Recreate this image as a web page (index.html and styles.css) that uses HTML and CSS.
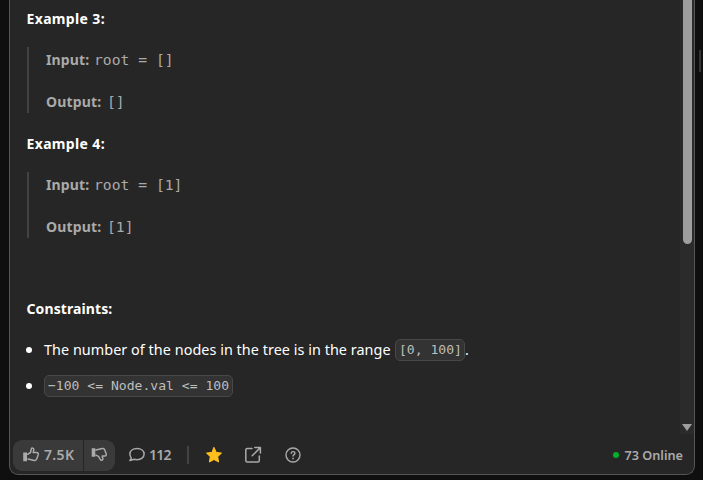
FILE: index.html
```
<!DOCTYPE html>
<html lang="en">
<head>
<meta charset="utf-8">
<title>Problem description</title>
<link rel="stylesheet" href="styles.css">
</head>
<body>
<main class="panel">
  <div class="body">
    <article class="content">
      <h2 class="title">Example 3:</h2>
      <div class="example">
        <p><strong class="t-input">Input:</strong><code>root = []</code></p>
        <p><strong class="t-output">Output:</strong><code>[]</code></p>
      </div>
      <h2 class="title">Example 4:</h2>
      <div class="example">
        <p><strong class="t-input">Input:</strong><code>root = [1]</code></p>
        <p><strong class="t-output">Output:</strong><code>[1]</code></p>
      </div>
      <h2 class="constraints">Constraints:</h2>
      <ul>
        <li><span class="sentence">The number of the nodes in the tree is in the range</span><code class="chip short">[0, 100]</code><span>.</span></li>
        <li><code class="chip">−100 &lt;= Node.val &lt;= 100</code></li>
      </ul>
    </article>
    <div class="scrollbar"><div class="thumb"></div><div class="arrow"></div></div>
  </div>
  <footer>
    <div class="votes">
      <button class="up"><svg width="18" height="18" viewBox="0 0 18 18"><path class="solid" d="M1.200 6.400h3.800v8.800H1.200z"/><path d="M5.600 8.300 8.500 6.500 9.300 3c.5-1.500 2.600-1 2.500.6L11.200 6.600h3.400c1.400 0 2 1 1.600 2.200l-1.500 4.100c-.4 1.300-1.300 1.800-2.500 1.500l-6.200-1.400"/></svg><span class="likes">7.5K</span></button>
      <button class="down"><svg width="18" height="18" viewBox="0 0 18 18"><path class="solid" d="M.7 2.300h3.600v8.400H.7z"/><path d="M4.900 4 11.200 2.500c1.300-.3 2.200.3 2.600 1.500l1.400 3.900c.4 1.300-.2 2.100-1.400 2.100h-2.600l.7 2.700c.2 1.700-1.800 2.200-2.600.8L7.500 10.400 4.900 9.100"/></svg></button>
    </div>
    <button class="comments"><svg width="18" height="18" viewBox="0 0 18 18"><path d="M9 2.600c4.100 0 7.100 2.300 7.100 5.500S13.100 13.700 9 13.700c-1 0-2-.1-2.800-.4l-4.300 1.200 1.400-2.500C2.400 11 1.900 9.700 1.900 8.100c0-3.200 3-5.500 7.100-5.500z"/></svg><span class="count">112</span></button>
    <i class="divider"></i>
    <svg class="star" width="18" height="18" viewBox="0 0 18 18"><path d="m9 1.600 2.300 4.800 5.200.7-3.800 3.600.9 5.300L9 13.500 4.400 16l.9-5.300-3.800-3.600 5.200-.7z"/></svg>
    <svg class="share" width="18" height="18" viewBox="0 0 18 18"><path d="M8 2.500H3.300c-1 0-1.500.6-1.500 1.500v10.500c0 1 .6 1.500 1.500 1.500h10.500c1 0 1.500-.6 1.500-1.500V10M10.800 1.500h5.600v5.400M16 1.900 8.200 9.800"/></svg>
    <svg class="help" width="18" height="18" viewBox="0 0 18 18"><circle cx="9" cy="9" r="7"/><path d="M7.200 7.300c.1-2.300 3.800-2.200 3.800 0 0 1.300-2 1.400-2 2.800"/><path class="solid" d="M8.200 11.700h1.600v1.500H8.200z"/></svg>
    <div class="online"><i></i><span>73 Online</span></div>
  </footer>
</main>
<div class="handle"></div>
</body>
</html>
```
FILE: styles.css
```
* { box-sizing: border-box; }
body { margin: 0; height: 480px; overflow: hidden; background: #0f0f0f; display: flex; padding-left: 9px; font-family: "Noto Sans", "Open Sans", sans-serif; font-size: 14px; color: #fff; }
.panel { width: 686px; height: 475px; background: #262626; border: 1px solid #555; border-top: 0; border-radius: 0 0 9px 9px; overflow: hidden; flex: none; }
.body { height: 434px; display: flex; }
.content { width: 670px; padding: 9px 0 0 17px; }
h2, p, ul { margin: 0; padding: 0; }
h2 { font-size: 14px; line-height: 20px; height: 39px; font-weight: 700; white-space: nowrap; margin-left: -.5px; }
.title { letter-spacing: .35px; }
.example { height: 66px; margin: -1px 0 21px; border-left: 2px solid #424242; padding: 2px 0 0 17px; color: #aaa; }
.example p { height: 42px; line-height: 22px; display: flex; align-items: flex-start; white-space: pre; }
.example strong { font-weight: 700; letter-spacing: .15px; }
.example code { font: 14.7px/22px "DejaVu Sans Mono", monospace; }
.t-input { width: 48px; }
.t-output { width: 61px; }
.constraints { margin-top: 61px; height: 40px; letter-spacing: .1px; }
ul { list-style: none; margin-left: -1px; }
li { height: 22px; margin-bottom: 14px; line-height: 22px; display: flex; align-items: center; white-space: pre; }
li::before { content: ""; width: 6px; height: 6px; border-radius: 50%; background: #fff; margin-right: 12px; }
.sentence { width: 351px; font-size: 14.4px; letter-spacing: .04px; }
.chip { height: 22px; border: 1px solid #484848; border-radius: 5px; background: #333; color: #bebebe; padding: 0 3px; font: 13.08px/20px "DejaVu Sans Mono", monospace; }
.short { width: 70px; }
.scrollbar { width: 14px; height: 434px; background: #2b2b2b; display: flex; flex-direction: column; align-items: center; justify-content: space-between; }
.thumb { width: 9px; height: 244px; background: #9f9f9f; border-radius: 0 0 5px 5px; }
.arrow { border: solid transparent; border-width: 7px 5px 0; border-top-color: #9f9f9f; margin: 0 0 3px; }
footer { height: 40px; display: flex; align-items: center; padding: 2px 11px 0 3px; color: #aaa; }
button { background: none; border: 0; padding: 0; color: inherit; font: 600 14px/20px "Noto Sans", "Open Sans", sans-serif; display: flex; align-items: center; }
svg { display: block; flex: none; fill: none; stroke: #aaa; stroke-width: 1.5; stroke-linejoin: round; stroke-linecap: round; }
.solid { fill: #aaa; stroke: none; }
.votes { display: flex; height: 31px; width: 102px; gap: 1px; border-radius: 9px; overflow: hidden; }
.votes button { background: #3a3a3a; height: 31px; }
.up { width: 70px; padding-left: 9px; gap: 4px; }
.likes { letter-spacing: .35px; }
.down { width: 31px; padding-left: 7px; }
.comments { margin-left: 13px; width: 59px; gap: 3px; }
.count { letter-spacing: -.8px; }
.divider { width: 2px; height: 18px; background: #434343; margin-right: 16px; }
.star { fill: #ffc01e; stroke: #ffc01e; stroke-width: 1; margin-right: 21px; }
.help { margin-left: 22px; stroke-width: 1.4; }
.online { margin-left: auto; display: flex; align-items: center; gap: 5px; font: 600 12.7px/18px "Noto Sans", "Open Sans", sans-serif; }
.online i { width: 6px; height: 6px; border-radius: 50%; background: #00af2c; }
.handle { width: 2px; height: 22px; background: #343434; margin: 50px 0 0 4px; }
```
